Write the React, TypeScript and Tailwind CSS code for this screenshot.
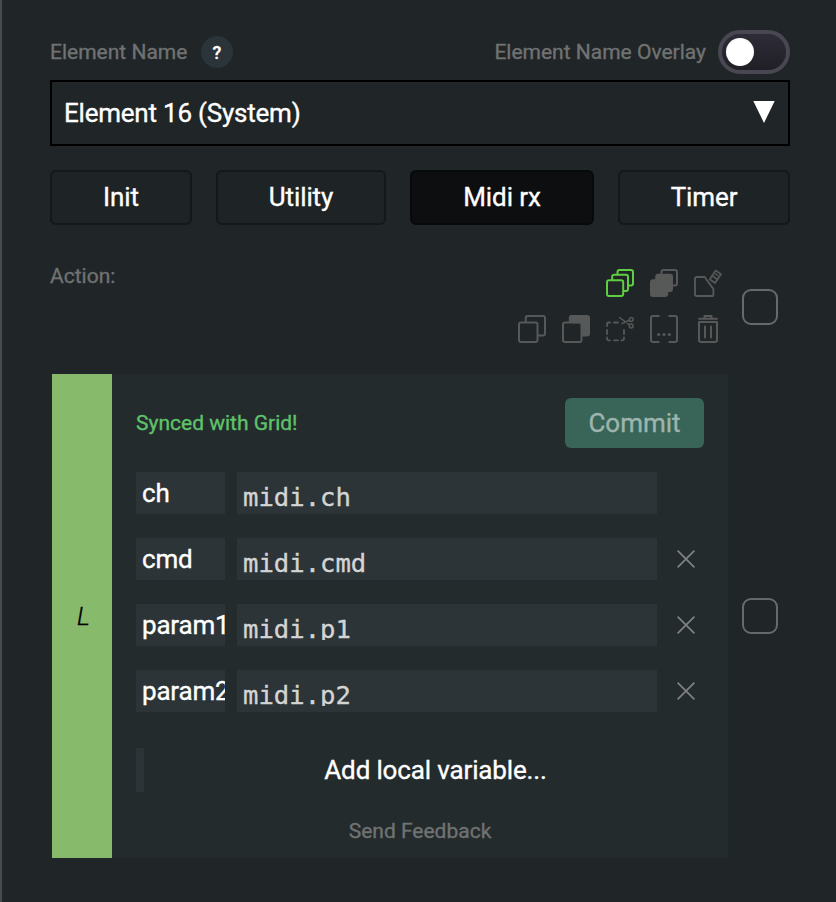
import React from "react";

const tabs = [
  { label: "Init", cls: "w-[142px] bg-[#1e2325] border-[#14181a]" },
  { label: "Utility", cls: "w-[170px] bg-[#1e2325] border-[#14181a]" },
  { label: "Midi rx", cls: "w-[184px] bg-[#0d0e10] border-[#08090a]" },
  { label: "Timer", cls: "w-[172px] bg-[#1e2325] border-[#14181a]" },
];

const rows = [
  { name: "ch", value: "midi.ch", removable: false },
  { name: "cmd", value: "midi.cmd", removable: true },
  { name: "param1", value: "midi.p1", removable: true },
  { name: "param2", value: "midi.p2", removable: true },
];

function Icon({ children, color = "#575858" }: { children: React.ReactNode; color?: string }) {
  return (
    <svg width="28" height="28" viewBox="0 0 28 28" fill="none" stroke={color} strokeWidth="2" strokeLinecap="round" strokeLinejoin="round">
      {children}
    </svg>
  );
}

function SelectAllIcon() {
  return (
    <Icon color="#5fce42">
      <rect x="1" y="11.2" width="16.2" height="15.8" rx="2" />
      <path d="M6.2 10.8V7.8a2 2 0 0 1 2-2H20a2 2 0 0 1 2 2v12.2a2 2 0 0 1-2 2h-2.4" />
      <path d="M11.5 5.4V3a2 2 0 0 1 2-2H25a2 2 0 0 1 2 2v11.6a2 2 0 0 1-2 2h-2.6" />
    </Icon>
  );
}

function StackFilledIcon() {
  return (
    <Icon>
      <rect x="1" y="11.2" width="16.2" height="15.8" rx="2" fill="#575858" />
      <rect x="6.2" y="5.8" width="15.8" height="16.2" rx="2" fill="#575858" />
      <path d="M11.5 5.4V3a2 2 0 0 1 2-2H25a2 2 0 0 1 2 2v11.6a2 2 0 0 1-2 2h-2.6" />
    </Icon>
  );
}

function ClearIcon() {
  return (
    <Icon>
      <path d="M2.5 8h8.2L19.4 20v5.4a1.600 1.600 0 0 1-1.600 1.600H2.600A1.600 1.600 0 0 1 1 25.400V9.600A1.600 1.600 0 0 1 2.500 8Z" strokeWidth="1.900" />
      <path d="M21.700 1.500 27 5.300 21 14 15.800 10.200Z" strokeWidth="1.700" />
      <path d="M18.200 6.800l5.200 3.700" strokeWidth="1.700" />
      <path d="M21.300 4.800 24 6.700" strokeWidth="1.300" />
    </Icon>
  );
}

function CopyIcon() {
  return (
    <Icon>
      <rect x="1" y="7.500" width="18.500" height="19.500" rx="2" />
      <path d="M7.700 7V3a2 2 0 0 1 2-2H25a2 2 0 0 1 2 2v15.500a2 2 0 0 1-2 2h-4.800" />
    </Icon>
  );
}

function PasteIcon() {
  return (
    <Icon>
      <path d="M7.800 7V3a2 2 0 0 1 2-2H25a2 2 0 0 1 2 2v15.500a2 2 0 0 1-2 2h-5V7.500Z" fill="#575858" />
      <rect x="1" y="7.500" width="18.500" height="19.500" rx="2" />
    </Icon>
  );
}

function CutIcon() {
  return (
    <Icon>
      <path d="M1 11V9a1.500 1.500 0 0 1 1.500-1.500H4M8 7.500h4M1 15v4M1 22.500v1.300a1.500 1.500 0 0 0 1.500 1.500H4M8 25.300h4M15.500 25.300h1a1.500 1.500 0 0 0 1.500-1.500v-1.500M18 19v-4" strokeWidth="1.800" />
      <path d="M13.500 2.500 23.300 9.600M15.800 8.600 23.300 5.200" strokeWidth="1.500" />
      <circle cx="25.200" cy="4.500" r="1.900" strokeWidth="1.500" />
      <circle cx="25.200" cy="11" r="1.900" strokeWidth="1.500" />
    </Icon>
  );
}

function BracketsIcon() {
  return (
    <Icon>
      <path d="M8.800 1H3a2 2 0 0 0-2 2v22a2 2 0 0 0 2 2h5.800M19.200 1H25a2 2 0 0 1 2 2v22a2 2 0 0 1-2 2h-5.800" />
      <g fill="#575858" stroke="none">
        <circle cx="8.700" cy="19.500" r="1.600" />
        <circle cx="14" cy="19.500" r="1.600" />
        <circle cx="19.300" cy="19.500" r="1.600" />
      </g>
    </Icon>
  );
}

function TrashIcon() {
  return (
    <Icon>
      <path d="M5 7h18v18a2 2 0 0 1-2 2H7a2 2 0 0 1-2-2ZM5 3.800h18M10.500 3.300V1h7v2.300M11 11.500v11M17 11.500v11" />
    </Icon>
  );
}

function Checkbox() {
  return <div className="size-9 rounded-[9px] border-2 border-[#666a6b]" />;
}

export default function App() {
  return (
    <div className="h-[902px] w-[836px] overflow-hidden border-l-2 border-[#4b4b4b] bg-[#202528] pl-12 font-['Roboto',sans-serif] whitespace-nowrap text-white [-webkit-text-stroke:0.35px]">
      <div className="w-[740px]">
        <header className="flex h-20 items-start justify-between pt-[30px]">
          <div className="flex h-11 items-center">
            <span className="w-[151px] pt-0.5 text-[21px] text-[#707272]">Element Name</span>
            <span className="flex size-8 items-center justify-center rounded-full bg-[#2b3438] text-[18px] font-medium">?</span>
          </div>
          <div className="flex h-11 items-center gap-3">
            <span className="pt-0.5 text-[21px] text-[#707272]">Element Name Overlay</span>
            <div className="flex h-11 w-[72px] items-center rounded-full border-4 border-[#484752] bg-linear-to-b from-[#2e2c38] to-[#201f26] pl-1">
              <div className="size-7 rounded-full bg-white" />
            </div>
          </div>
        </header>

        <div className="flex h-[66px] items-center justify-between border-2 border-black pr-[13px] pl-3 text-[26px] tracking-[-0.22px]">
          <span>Element 16 (System)</span>
          <svg className="-mt-0.5" width="22" height="22" viewBox="0 0 22 22">
            <path d="M.3 0h21.400L11 22Z" fill="white" />
          </svg>
        </div>

        <nav className="mt-6 flex gap-6">
          {tabs.map((t) => (
            <button key={t.label} className={`flex h-[55px] items-center justify-center rounded-[6px] border-2 text-[26px] tracking-[-0.1px] ${t.cls}`}>
              {t.label}
            </button>
          ))}
        </nav>

        <section className="mt-[38px] flex h-[111px] items-start">
          <span className="pt-px text-[21px] leading-[24px] text-[#707272]">Action:</span>
          <div className="mt-1.5 mr-5 ml-auto grid grid-cols-5 gap-x-4 gap-y-[18px]">
            <span className="col-start-3"><SelectAllIcon /></span>
            <StackFilledIcon />
            <ClearIcon />
            <CopyIcon />
            <PasteIcon />
            <CutIcon />
            <BracketsIcon />
            <TrashIcon />
          </div>
          <div className="mt-[26px] mr-3"><Checkbox /></div>
        </section>

        <section className="flex items-center pl-0.5">
          <div className="flex h-[484px] w-[676px] bg-[#242b2d]">
            <div className="flex w-[60px] items-center justify-center bg-[#88ba6c] pt-0.5 pl-[3px] text-[25px] text-black italic">
              <span className="font-light">L</span>
            </div>
            <div className="flex-1 px-6 pt-6">
              <div className="flex h-[50px] items-center justify-between">
                <span className="pt-0.5 text-[21px] text-[#5fc26a]">Synced with Grid!</span>
                <button className="h-[50px] w-[139px] rounded-[6px] bg-[#386558] text-[26px] text-[#9db5ad]">Commit</button>
              </div>
              <div className="mt-6 flex flex-col gap-6">
                {rows.map((r) => (
                  <div key={r.name} className="flex h-[42px] items-center">
                    <div className="h-[42px] w-[89px] overflow-hidden bg-[#2c3437] pl-1.5 text-[26px] leading-[42px] tracking-[-0.2px]">{r.name}</div>
                    <div className="ml-3 h-[42px] w-[420px] bg-[#2c3437] pl-1.5">
                      <div className="h-9 overflow-hidden font-['DejaVu_Sans_Mono',monospace] text-[25.6px] leading-[50px] text-[#d4d4d4]">{r.value}</div>
                    </div>
                    {r.removable && (
                      <svg className="ml-5" width="18" height="18" viewBox="0 0 18 18" stroke="#808283" strokeWidth="1.700">
                        <path d="M.6.6 17.400 17.400M17.400.6.6 17.400" />
                      </svg>
                    )}
                  </div>
                ))}
              </div>
              <div className="mt-9 flex h-11 items-center">
                <div className="h-11 w-2 bg-[#2c3437]" />
                <span className="flex-1 pl-[23px] text-center text-[26px] tracking-[-0.15px]">Add local variable...</span>
              </div>
              <div className="mt-[26px] text-center text-[21px] leading-[26px] text-[#707272]">Send Feedback</div>
            </div>
          </div>
          <div className="ml-3.5"><Checkbox /></div>
        </section>
      </div>
    </div>
  );
}
